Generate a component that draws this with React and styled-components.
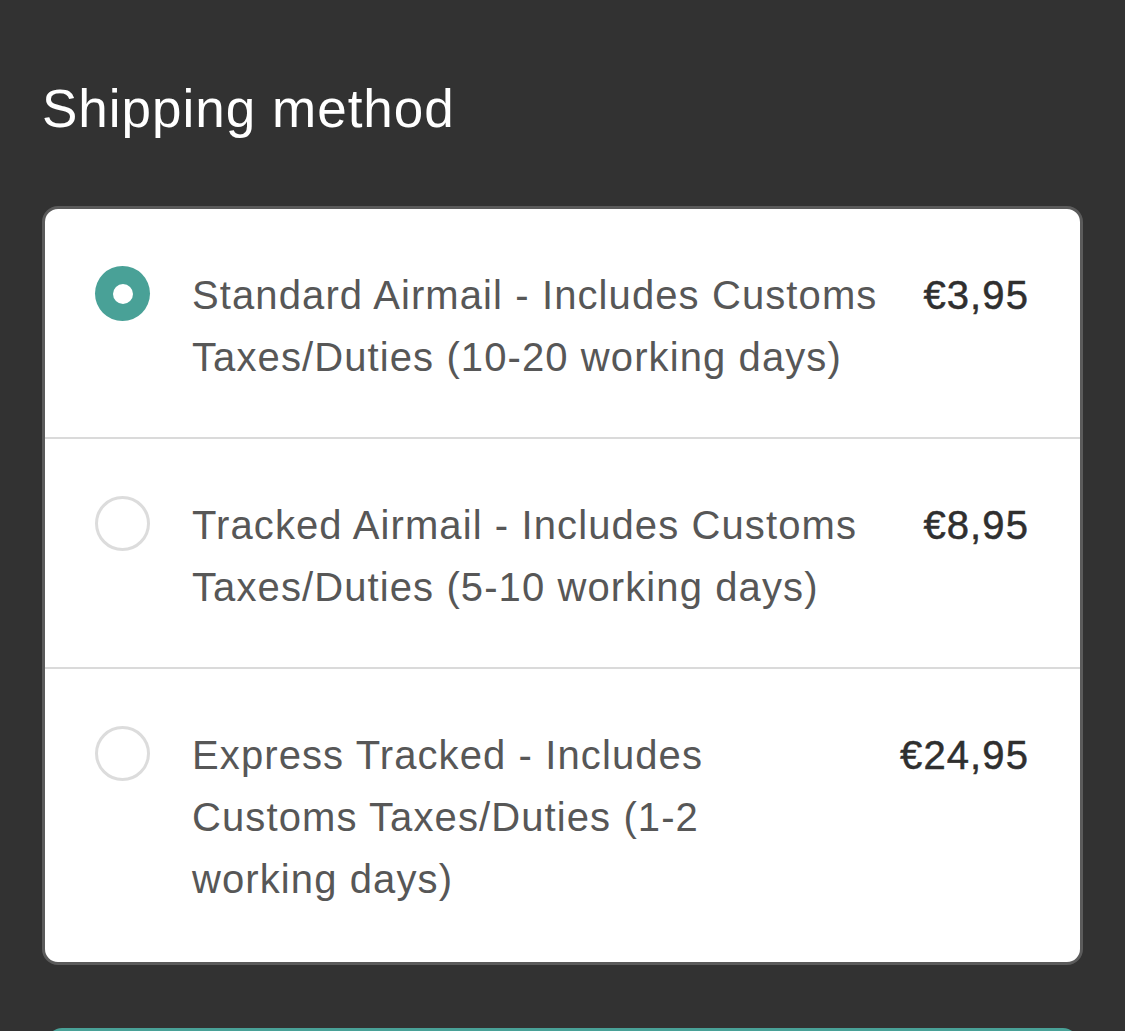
import React, { useState } from 'react'
import styled, { createGlobalStyle } from 'styled-components'

const GlobalStyle = createGlobalStyle`
  html, body {
    margin: 0;
    padding: 0;
    background: #323232;
  }
  body {
    font-family: "Liberation Sans", Arial, sans-serif;
    -webkit-font-smoothing: antialiased;
  }
`

const Page = styled.div`
  min-height: 1031px;
  padding: 79px 42px 0;
  box-sizing: border-box;
  overflow: hidden;
`

const Title = styled.h2`
  margin: 0 0 67px;
  font-size: 53px;
  line-height: 60px;
  font-weight: 400;
  letter-spacing: 1px;
  color: #fff;
`

const Card = styled.div`
  background: #fff;
  border: 3px solid #5b5b5b;
  border-radius: 16px;
  overflow: hidden;
`

const Row = styled.label`
  display: flex;
  align-items: flex-start;
  padding: 55px 51px 49px 50px;
  cursor: pointer;
  & + & {
    border-top: 2px solid #dadada;
  }
  &:last-child {
    padding-bottom: 52px;
  }
`

const Radio = styled.span`
  flex: none;
  width: 55px;
  height: 55px;
  margin-top: 2px;
  margin-right: 42px;
  border-radius: 50%;
  box-sizing: border-box;
  display: flex;
  align-items: center;
  justify-content: center;
  background: ${p => (p.$checked ? '#49a197' : '#fff')};
  border: ${p => (p.$checked ? 'none' : '3px solid #dcdcdc')};
  &::after {
    content: '';
    display: ${p => (p.$checked ? 'block' : 'none')};
    width: 20px;
    height: 20px;
    border-radius: 50%;
    background: #fff;
  }
`

const Label = styled.span`
  flex: 1;
  font-size: 40px;
  line-height: 62px;
  letter-spacing: 1.1px;
  color: #575757;
`

const Price = styled.span`
  flex: none;
  margin-left: 40px;
  font-size: 40px;
  line-height: 62px;
  letter-spacing: 1.1px;
  color: #2f2f2f;
  -webkit-text-stroke: 0.5px #2f2f2f;
`

const Continue = styled.button`
  display: block;
  width: calc(100% - 12px);
  height: 90px;
  margin: 63px 6px 0;
  border: none;
  border-radius: 14px;
  background: #49a197;
`

const methods = [
  { id: 'standard', label: 'Standard Airmail - Includes Customs Taxes/Duties (10-20 working\u00a0days)', price: '€3,95' },
  { id: 'tracked', label: 'Tracked Airmail - Includes Customs Taxes/Duties (5-10 working\u00a0days)', price: '€8,95' },
  { id: 'express', label: 'Express Tracked - Includes Customs Taxes/Duties (1-2 working\u00a0days)', price: '€24,95' },
]

export default function App() {
  const [selected, setSelected] = useState('standard')
  return (
    <Page>
      <GlobalStyle />
      <Title>Shipping method</Title>
      <Card>
        {methods.map(m => (
          <Row key={m.id} onClick={() => setSelected(m.id)}>
            <Radio $checked={selected === m.id} />
            <Label>{m.label}</Label>
            <Price>{m.price}</Price>
          </Row>
        ))}
      </Card>
      <Continue aria-label="Continue" />
    </Page>
  )
}
